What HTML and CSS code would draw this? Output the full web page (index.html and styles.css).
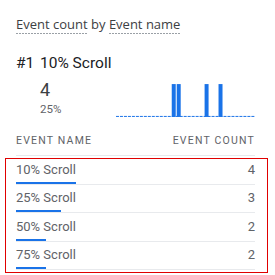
FILE: index.html
```html
<!DOCTYPE html>
<html>
<head>
<meta charset="utf-8">
<link rel="stylesheet" href="styles.css">
</head>
<body>
<div class="card">
  <div class="title"><span class="dim">Event count</span> by <span class="dim">Event name</span></div>
  <div class="top">
    <span class="rank">#1</span><span class="top-name">10% Scroll</span>
  </div>
  <div class="summary">
    <div class="stat">
      <div class="value">4</div>
      <div class="pct">25%</div>
    </div>
    <svg class="spark" width="140" height="33" viewBox="0 0 140 33">
      <line x1="0" y1="32.5" x2="140" y2="32.5" stroke="#1a73e8" stroke-width="1" stroke-dasharray="3 1"/>
      <rect x="56" y="0" width="4" height="33" fill="#1a73e8"/>
      <rect x="61" y="0" width="4" height="33" fill="#1a73e8"/>
      <rect x="89" y="0" width="4" height="33" fill="#1a73e8"/>
      <rect x="103" y="0" width="4" height="33" fill="#1a73e8"/>
    </svg>
  </div>
  <div class="head">
    <span>EVENT NAME</span><span>EVENT COUNT</span>
  </div>
  <div class="rows">
    <div class="row"><div class="cells"><span>10% Scroll</span><span>4</span></div><div class="bar" style="width:60px"></div></div>
    <div class="row"><div class="cells"><span>25% Scroll</span><span>3</span></div><div class="bar" style="width:45px"></div></div>
    <div class="row"><div class="cells"><span>50% Scroll</span><span>2</span></div><div class="bar" style="width:30px"></div></div>
    <div class="row"><div class="cells"><span>75% Scroll</span><span>2</span></div><div class="bar" style="width:30px"></div></div>
  </div>
</div>
</body>
</html>
```
FILE: styles.css
```css
html, body { margin: 0; padding: 0; background: #fff; }
.card {
  padding: 14px 20px 0 16px;
  font-family: Roboto, sans-serif;
  color: #3c4043;
}
.title {
  font-family: "Open Sans", Roboto, sans-serif;
  font-size: 13px;
  line-height: 20px;
  color: #3c4043;
}
.dim {
  padding-bottom: 1px;
  background: linear-gradient(to right, #9aa0a6 2px, transparent 2px) repeat-x left bottom / 3px 1px;
}
.top {
  margin-top: 18px;
  font-size: 15.5px;
  line-height: 22px;
  color: #202124;
  display: flex;
}
.rank { width: 24px; }
.summary {
  display: flex;
  align-items: flex-start;
  padding-left: 24px;
  margin-top: 5px;
}
.stat { width: 76px; }
.value {
  font-size: 18px;
  line-height: 22px;
  color: #3c4043;
}
.pct {
  font-size: 11.5px;
  line-height: 14px;
  color: #5f6368;
  margin-top: 1px;
}
.spark { display: block; margin-top: 5px; }
.head {
  display: flex;
  justify-content: space-between;
  font-size: 10.5px;
  letter-spacing: 1.2px;
  color: #5f6368;
  margin-top: 16px;
  line-height: 16px;
  padding-bottom: 6px;
  border-bottom: 1px solid #e8eaed;
}
.rows {
  margin: 2px -13px 0 -11px;
  padding: 0 12px 2px 10px;
  border: 1px solid #e00000;
}
.row {
  border-bottom: 1px solid #e8eaed;
  padding-top: 3.33px;
  font-size: 13px;
  color: #5f6368;
}
.row:first-child { padding-top: 1px; }
.cells {
  display: flex;
  justify-content: space-between;
  line-height: 20px;
  padding-bottom: 2px;
}
.bar {
  height: 2px;
  background: #1a73e8;
}
```
